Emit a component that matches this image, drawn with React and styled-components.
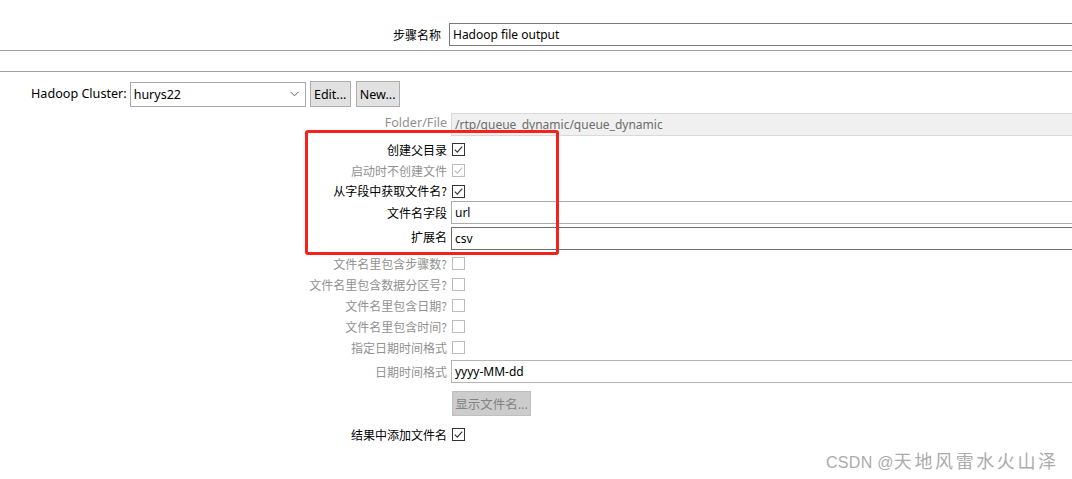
import React from 'react';
import styled, { createGlobalStyle } from 'styled-components';

const Global = createGlobalStyle`
  html, body { margin: 0; padding: 0; background: #fff; }
  body {
    font-family: "Noto Sans", "Noto Sans CJK SC", sans-serif;
    font-size: 12px;
    color: #000;
  }
`;

const Page = styled.div`
  position: relative;
  width: 1072px;
  height: 479px;
  overflow: hidden;
  background: #fff;
`;

const StepRow = styled.div`
  display: grid;
  grid-template-columns: 441px 1fr;
  column-gap: 8px;
  align-items: center;
  padding-top: 23px;
  height: 23px;
`;

const Label = styled.div`
  text-align: right;
  white-space: nowrap;
  font-family: "Noto Sans CJK SC", "Noto Sans", sans-serif;
  font-size: 12px;
  line-height: 16px;
  color: ${p => (p.$disabled ? '#919191' : '#000')};
  transform: translateY(${p => p.$dy || 0}px);
`;

const LatinLabel = styled(Label)`
  font-family: "Noto Sans", sans-serif;
  font-size: 12.6px;
`;

const TabBand = styled.div`
  margin-top: 4px;
  height: 20px;
  border-top: 1px solid #a0a0a0;
  border-bottom: 1px solid #a0a0a0;
`;

const ClusterRow = styled.div`
  display: flex;
  align-items: center;
  height: 26px;
  margin-top: 9px;
  padding-left: 31px;
`;

const Combo = styled.div`
  box-sizing: border-box;
  width: 176px;
  height: 25px;
  margin-left: 3px;
  border: 1px solid #a9a9a9;
  display: flex;
  align-items: center;
  justify-content: space-between;
  padding: 0 6px 0 3px;
  font-size: 12.5px;
  background: #fff;
`;

const Button = styled.div`
  box-sizing: border-box;
  height: ${p => p.$h || 26}px;
  width: ${p => p.$w}px;
  margin-left: ${p => p.$ml || 0}px;
  display: flex;
  align-items: center;
  justify-content: center;
  background: ${p => (p.$disabled ? '#cccccc' : '#e1e1e1')};
  border: 1px solid ${p => (p.$disabled ? '#bfbfbf' : '#adadad')};
  color: ${p => (p.$disabled ? '#838383' : '#000')};
  font-family: "Noto Sans", "Noto Sans CJK SC", sans-serif;
  font-size: 12.5px;
`;

const Form = styled.div`
  margin-top: 6px;
  display: flex;
  flex-direction: column;
`;

const FormRow = styled.div`
  display: grid;
  grid-template-columns: 447px 1fr;
  column-gap: 4px;
  align-items: center;
  height: ${p => p.$h}px;
  margin-top: ${p => p.$mt || 0}px;
`;

const Input = styled.div`
  box-sizing: border-box;
  height: 23px;
  margin-right: -6px;
  display: flex;
  align-items: center;
  padding-left: 3px;
  border: 1px solid ${p => p.$border || '#ababab'};
  background: ${p => (p.$disabled ? '#f0f0f0' : '#fff')};
  color: ${p => (p.$disabled ? '#6d6d6d' : '#000')};
  border-color: ${p => (p.$disabled ? '#d9d9d9' : p.$border || '#ababab')};
  font-size: 12px;
  white-space: nowrap;
`;

const Highlight = styled.div`
  position: absolute;
  left: 305px;
  top: 130px;
  width: 254px;
  height: 125px;
  box-sizing: border-box;
  border: 3px solid #f5221b;
  border-radius: 3px;
  pointer-events: none;
`;

const Watermark = styled.div`
  position: absolute;
  left: 826px;
  top: 449px;
  color: #ababab;
  font-family: "Noto Sans CJK SC", sans-serif;
  font-size: 18px;
  line-height: 22px;
  letter-spacing: 2.6px;
  white-space: nowrap;
  & > span {
    font-family: "Liberation Sans", sans-serif;
    font-size: 16px;
    letter-spacing: 0.3px;
  }
`;

const Check = ({ checked, disabled }) => {
  const c = disabled ? '#bcbcbc' : '#333';
  return (
    <svg width="13" height="13" viewBox="0 0 13 13" style={{ display: 'block', marginLeft: 1 }}>
      <rect x="0.5" y="0.5" width="12" height="12" fill="#fff" stroke={c} />
      {checked && (
        <path d="M2.8 6.6 L5.3 9.1 L10.2 3.6" fill="none" stroke={c} strokeWidth="1.2" />
      )}
    </svg>
  );
};

const Chevron = () => (
  <svg width="9" height="6" viewBox="0 0 9 6" style={{ display: 'block' }}>
    <path d="M0.5 0.8 L4.5 4.8 L8.5 0.8" fill="none" stroke="#606060" strokeWidth="1" />
  </svg>
);

const checkRows1 = [
  { label: '创建父目录', checked: true },
  { label: '启动时不创建文件', checked: true, disabled: true },
];

const checkRows2 = [
  { label: '文件名里包含步骤数?' },
  { label: '文件名里包含数据分区号?' },
  { label: '文件名里包含日期?' },
  { label: '文件名里包含时间?' },
  { label: '指定日期时间格式' },
];

export default function App() {
  return (
    <Page>
      <Global />
      <StepRow>
        <Label>步骤名称</Label>
        <Input $border="#7a7a7a">Hadoop file output</Input>
      </StepRow>
      <TabBand />
      <ClusterRow>
        <LatinLabel>Hadoop Cluster:</LatinLabel>
        <Combo>
          <span>hurys22</span>
          <Chevron />
        </Combo>
        <Button $w={41} $ml={4}>Edit...</Button>
        <Button $w={44} $ml={5}>New...</Button>
      </ClusterRow>
      <Form>
        <FormRow $h={23}>
          <LatinLabel $disabled $dy={-2}>Folder/File</LatinLabel>
          <Input $disabled>/rtp/queue_dynamic/queue_dynamic</Input>
        </FormRow>
        {checkRows1.map((r, i) => (
          <FormRow key={r.label} $h={21} $mt={i === 0 ? 3 : 0}>
            <Label $disabled={r.disabled}>{r.label}</Label>
            <Check checked={r.checked} disabled={r.disabled} />
          </FormRow>
        ))}
        <FormRow $h={20}>
          <Label>从字段中获取文件名?</Label>
          <Check checked />
        </FormRow>
        <FormRow $h={23}>
          <Label>文件名字段</Label>
          <Input>url</Input>
        </FormRow>
        <FormRow $h={23} $mt={3}>
          <Label $dy={-2}>扩展名</Label>
          <Input $border="#6e6e6e">csv</Input>
        </FormRow>
        {checkRows2.map((r, i) => (
          <FormRow key={r.label} $h={21} $mt={i === 0 ? 3 : 0}>
            <Label $disabled>{r.label}</Label>
            <Check disabled />
          </FormRow>
        ))}
        <FormRow $h={23} $mt={2}>
          <Label $disabled>日期时间格式</Label>
          <Input $border="#b4b4b4">yyyy-MM-dd</Input>
        </FormRow>
        <FormRow $h={25} $mt={8}>
          <span />
          <Button $w={79} $h={25} $ml={1} $disabled>显示文件名...</Button>
        </FormRow>
        <FormRow $h={21} $mt={8}>
          <Label>结果中添加文件名</Label>
          <Check checked />
        </FormRow>
      </Form>
      <Highlight />
      <Watermark><span>CSDN @</span>天地风雷水火山泽</Watermark>
    </Page>
  );
}
